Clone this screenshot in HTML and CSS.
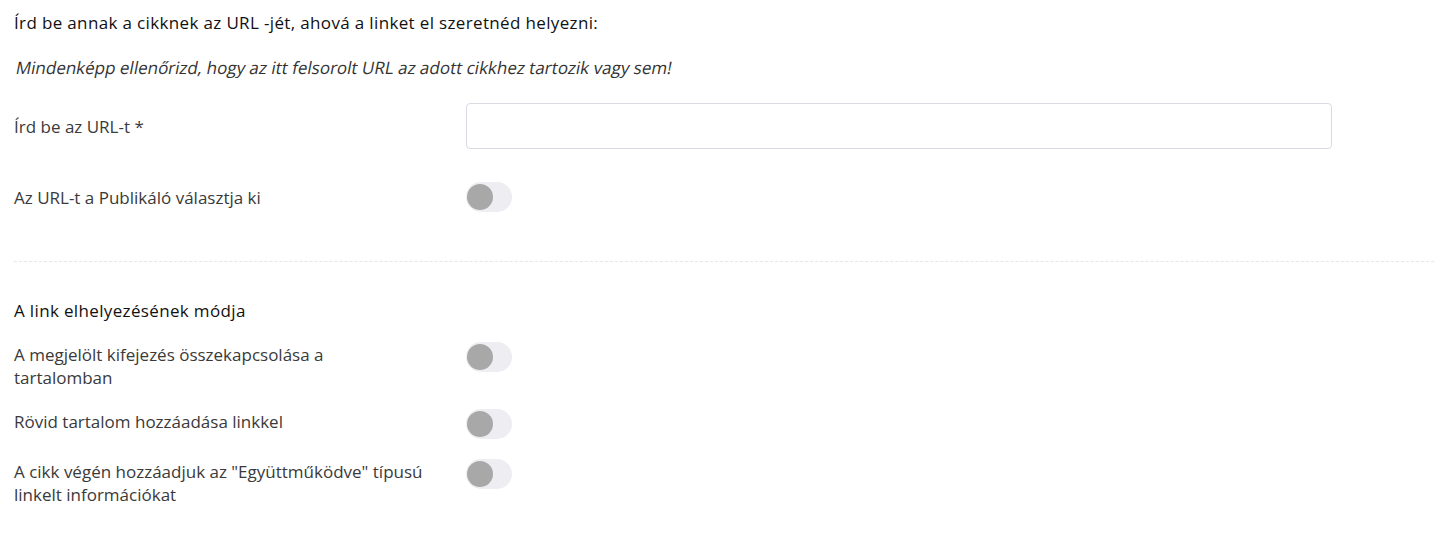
FILE: index.html
```html
<!DOCTYPE html>
<html>
<head>
    <meta charset="utf-8">
    <title>Link elhelyezése</title>
    <link rel="stylesheet" href="styles.css">
</head>
<body>
    <div class="link-form">
        <!-- URL megadása -->
        <div class="section">
            <div class="section-title">Írd be annak a cikknek az URL -jét, ahová a linket el szeretnéd helyezni:</div>
            <div class="section-note"><span class="note-text">Mindenképp ellenőrizd, hogy az itt felsorolt URL az adott cikkhez tartozik vagy sem!</span></div>

            <div class="form-row row-input">
                <label class="form-label" for="url">Írd be az URL-t *</label>
                <div class="form-control">
                    <input class="text-input" id="url" type="text">
                </div>
            </div>

            <div class="form-row">
                <div class="form-label">Az URL-t a Publikáló választja ki</div>
                <div class="form-control">
                    <span class="toggle"><span class="toggle-knob"></span></span>
                </div>
            </div>
        </div>

        <div class="divider"></div>

        <!-- Link elhelyezésének módja -->
        <div class="section">
            <div class="section-title title-second">A link elhelyezésének módja</div>

            <div class="form-row row-toggle">
                <div class="form-label">A megjelölt kifejezés összekapcsolása a tartalomban</div>
                <div class="form-control">
                    <span class="toggle"><span class="toggle-knob"></span></span>
                </div>
            </div>
            <div class="form-row row-toggle">
                <div class="form-label">Rövid tartalom hozzáadása linkkel</div>
                <div class="form-control">
                    <span class="toggle"><span class="toggle-knob"></span></span>
                </div>
            </div>
            <div class="form-row row-toggle">
                <div class="form-label">A cikk végén hozzáadjuk az "Együttműködve" típusú linkelt információkat</div>
                <div class="form-control">
                    <span class="toggle"><span class="toggle-knob"></span></span>
                </div>
            </div>
        </div>
    </div>
</body>
</html>
```

FILE: styles.css
```css
body {
    font-family: "Open Sans", "Liberation Sans", sans-serif;
    margin: 0;
    padding: 0;
    background: #fff;
    color: #3a3a3a;
    font-size: 17px;
    line-height: 23px;
}
.link-form {
    padding: 11px 2px 0 14px;
}
.section-title {
    color: #111;
    font-weight: 500;
    letter-spacing: 0.35px;
}
.section-note {
    margin-top: 22px;
}
/* a regular betű döntve, mint az eredetiben */
.note-text {
    display: inline-block;
    color: #333;
    transform: skewX(-11deg);
    transform-origin: left bottom;
}
.form-row {
    display: grid;
    grid-template-columns: 452px 866px;
    align-items: center;
    margin-top: 33px;
}
.row-input {
    margin-top: 24px;
}
.form-label {
    padding-right: 42px;
}
.text-input {
    display: block;
    box-sizing: border-box;
    width: 100%;
    height: 46px;
    border: 1px solid #dadae3;
    border-radius: 4px;
    outline: none;
    font: inherit;
    padding: 0 12px;
}
.toggle {
    display: block;
    width: 46px;
    height: 30px;
    border-radius: 15px;
    background: #ededf2;
    position: relative;
}
.toggle-knob {
    position: absolute;
    left: 1px;
    top: 2px;
    width: 26px;
    height: 26px;
    border-radius: 50%;
    background: #a8a8a8;
}
.divider {
    border-top: 1px dashed #e6e6e6;
    margin-top: 49px;
}
.title-second {
    margin-top: 37px;
}
.row-toggle {
    align-items: start;
    margin-top: 20px;
}
.row-toggle .form-label {
    padding-top: 1px;
}
```
